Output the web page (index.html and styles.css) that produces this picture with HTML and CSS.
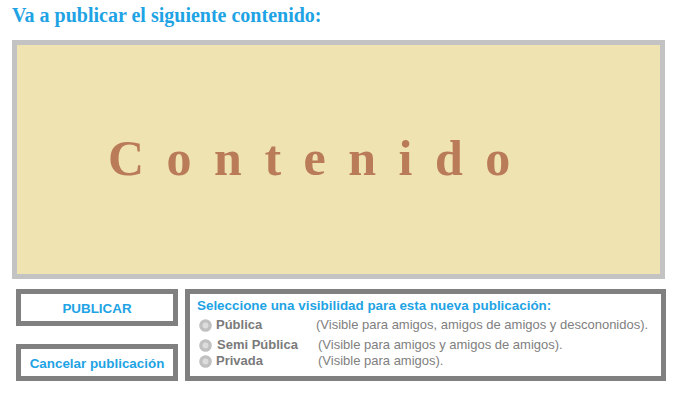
FILE: index.html
```html
<!DOCTYPE html>
<html lang="es">
<head>
<meta charset="utf-8">
<title>Publicar</title>
<link rel="stylesheet" href="styles.css">
</head>
<body>
<h1 class="title">Va a publicar el siguiente contenido:</h1>
<div class="preview">
  <span class="preview-text">Contenido</span>
</div>
<div class="bottom">
  <div class="actions">
    <div class="btn">PUBLICAR</div>
    <div class="btn">Cancelar publicación</div>
  </div>
  <div class="visibility">
    <div class="vis-title">Seleccione una visibilidad para esta nueva publicación:</div>
    <div class="opt opt1">
      <svg class="radio" width="13" height="13" viewBox="0 0 13 13"><circle cx="6.5" cy="6.5" r="6.3" fill="#c0c0c0"/><circle cx="6.5" cy="6.5" r="3" fill="#dcdcdc"/></svg>
      <span class="label">Pública</span>
      <span class="desc">(Visible para amigos, amigos de amigos y descononidos).</span>
    </div>
    <div class="opt opt2">
      <svg class="radio" width="13" height="13" viewBox="0 0 13 13"><circle cx="6.5" cy="6.5" r="6.3" fill="#c0c0c0"/><circle cx="6.5" cy="6.5" r="3" fill="#dcdcdc"/></svg>
      <span class="label">Semi Pública</span>
      <span class="desc">(Visible para amigos y amigos de amigos).</span>
    </div>
    <div class="opt opt3">
      <svg class="radio" width="13" height="13" viewBox="0 0 13 13"><circle cx="6.5" cy="6.5" r="6.3" fill="#c0c0c0"/><circle cx="6.5" cy="6.5" r="3" fill="#dcdcdc"/></svg>
      <span class="label">Privada</span>
      <span class="desc">(Visible para amigos).</span>
    </div>
  </div>
</div>
</body>
</html>
```
FILE: styles.css
```css
html, body {
  margin: 0;
  padding: 0;
  background: #ffffff;
}
body {
  font-family: "Liberation Sans", Arial, sans-serif;
}
.title {
  margin: 0;
  padding: 4px 0 0 12px;
  font-family: "Liberation Serif", "Times New Roman", serif;
  font-weight: bold;
  font-size: 20px;
  line-height: 23px;
  color: #1ea3e4;
}
.preview {
  box-sizing: border-box;
  margin: 13px 0 0 12px;
  width: 653px;
  height: 239px;
  border: 5px solid #c3c3c3;
  background: #efe3b1;
  display: flex;
  align-items: center;
  padding-left: 91px;
}
.preview-text {
  font-family: "Liberation Serif", "Times New Roman", serif;
  font-weight: bold;
  font-size: 50px;
  letter-spacing: 22.5px;
  color: #b97b58;
  line-height: 1;
  margin-top: -4px;
}
.bottom {
  display: flex;
  margin: 10px 0 0 16px;
  gap: 7px;
}
.actions {
  display: flex;
  flex-direction: column;
  gap: 18px;
  width: 162px;
}
.btn {
  box-sizing: border-box;
  height: 37px;
  border: 5px solid #808080;
  background: #fff;
  display: flex;
  align-items: center;
  justify-content: center;
  font-weight: bold;
  font-size: 13.4px;
  padding-top: 1px;
  color: #1ea3e4;
}
.visibility {
  box-sizing: border-box;
  width: 481px;
  height: 92px;
  border: 5px solid #808080;
  background: #fff;
  padding: 4px 0 0 7px;
}
.vis-title {
  font-weight: bold;
  font-size: 13.4px;
  line-height: 15px;
  color: #1ea3e4;
}
.opt {
  display: flex;
  align-items: center;
  font-size: 13px;
  line-height: 16px;
  color: #7a7a7a;
}
.radio {
  flex: none;
  margin-left: 2px;
  margin-right: 4px;
}
.label {
  font-weight: bold;
  width: 100px;
  flex: none;
}
.desc {
  color: #808080;
}
.opt1 {
  margin-top: 4px;
}
.opt2 {
  margin-top: 4px;
}
.opt2 .label {
  margin-left: 1px;
}
.opt2 .desc {
  margin-left: 1px;
}
.opt3 .desc {
  margin-left: 2px;
}
```
